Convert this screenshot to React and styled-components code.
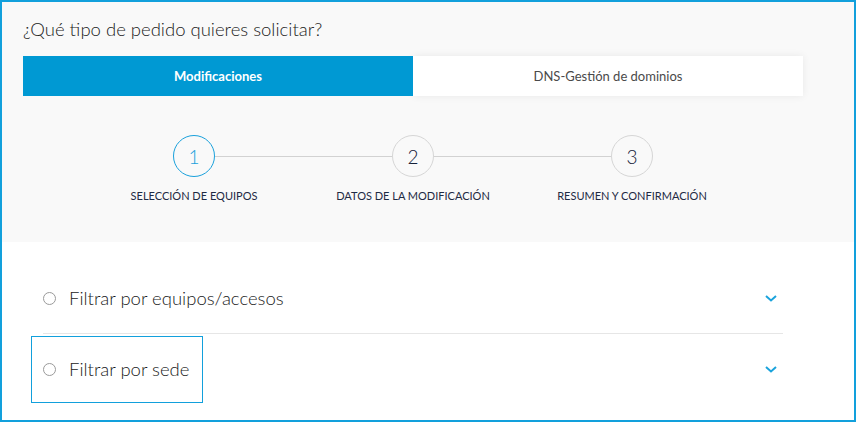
import React from "react";
import styled, { createGlobalStyle } from "styled-components";

const Global = createGlobalStyle`
  html, body { margin: 0; padding: 0; background: #fff; }
  body { font-family: Lato, "Open Sans", sans-serif; }
  * { box-sizing: border-box; }
`;

const Frame = styled.div`
  width: 856px;
  height: 422px;
  border: 2px solid #12a0dc;
  background: #fff;
  display: flex;
  flex-direction: column;
  overflow: hidden;
`;

const Header = styled.section`
  background: #f9f9f9;
  height: 240px;
  padding: 15px 51px 0 21px;
  display: flex;
  flex-direction: column;
`;

const Title = styled.h1`
  margin: 0;
  font-size: 18.5px;
  line-height: 24px;
  font-weight: 300;
  color: #222;
`;

const Tabs = styled.div`
  margin-top: 15px;
  display: flex;
  height: 40px;
  width: 780px;
`;

const Tab = styled.button`
  flex: 1;
  border: 0;
  margin: 0;
  font-family: inherit;
  font-size: 13px;
  font-weight: ${(p) => (p.$active ? 700 : 400)};
  color: ${(p) => (p.$active ? "#fff" : "#4a4a4a")};
  background: ${(p) => (p.$active ? "#0099d3" : "#fff")};
  box-shadow: ${(p) => (p.$active ? "none" : "0 0 8px rgba(0,0,0,0.07)")};
  position: relative;
  z-index: ${(p) => (p.$active ? 1 : 0)};
  cursor: pointer;
`;

const Stepper = styled.div`
  margin-top: 39px;
  display: flex;
  flex-direction: column;
  align-items: center;
`;

const CircleRow = styled.div`
  display: flex;
  align-items: center;
`;

const Circle = styled.div`
  width: 42px;
  height: 42px;
  border-radius: 50%;
  border: 1px solid ${(p) => (p.$active ? "#1aa1dc" : "#d6d6d6")};
  color: ${(p) => (p.$active ? "#1aa1dc" : "#152038")};
  background: #f9f9f9;
  display: flex;
  align-items: center;
  justify-content: center;
  font-size: 19px;
  font-weight: 300;
`;

const Connector = styled.div`
  width: 177px;
  height: 1px;
  background: #d2d2d2;
`;

const LabelRow = styled.div`
  margin-top: 12px;
  display: grid;
  grid-template-columns: repeat(3, 219px);
`;

const StepLabel = styled.div`
  text-align: center;
  font-size: 11px;
  line-height: 14px;
  color: #1e2a44;
  text-transform: uppercase;
`;

const List = styled.section`
  padding: 21px 71px 0 41px;
  display: flex;
  flex-direction: column;
`;

const Row = styled.div`
  height: ${(p) => (p.$last ? 70 : 71)}px;
  display: flex;
  align-items: center;
  justify-content: space-between;
  padding-right: 6px;
  border-bottom: ${(p) => (p.$last ? "none" : "1px solid #e6e6e6")};
`;

const Option = styled.label`
  margin-left: -12px;
  height: 67px;
  width: 172px;
  padding-left: 11px;
  display: flex;
  align-items: center;
  border: 1px solid ${(p) => (p.$focused ? "#12a0dc" : "transparent")};
  white-space: nowrap;
  cursor: pointer;
`;

const Radio = styled.span`
  width: 13px;
  height: 13px;
  border-radius: 50%;
  border: 1px solid #9a9a9a;
  background: #fff;
  margin-right: 13px;
  flex: none;
`;

const OptionText = styled.span`
  font-size: 18.5px;
  font-weight: 300;
  color: #1a1a1a;
`;

const Chevron = () => (
  <svg width="12" height="7" viewBox="0 0 12 7" fill="none">
    <polyline points="1,1 6,5.5 11,1" stroke="#1aa3dc" strokeWidth="2" />
  </svg>
);

const steps = ["Selección de equipos", "Datos de la modificación", "Resumen y confirmación"];

export default function App() {
  return (
    <>
      <Global />
      <Frame>
        <Header>
          <Title>¿Qué tipo de pedido quieres solicitar?</Title>
          <Tabs>
            <Tab $active>Modificaciones</Tab>
            <Tab>DNS-Gestión de dominios</Tab>
          </Tabs>
          <Stepper>
            <CircleRow>
              <Circle $active>1</Circle>
              <Connector />
              <Circle>2</Circle>
              <Connector />
              <Circle>3</Circle>
            </CircleRow>
            <LabelRow>
              {steps.map((s) => (
                <StepLabel key={s}>{s}</StepLabel>
              ))}
            </LabelRow>
          </Stepper>
        </Header>
        <List>
          <Row>
            <Option>
              <Radio />
              <OptionText>Filtrar por equipos/accesos</OptionText>
            </Option>
            <Chevron />
          </Row>
          <Row $last>
            <Option $focused>
              <Radio />
              <OptionText>Filtrar por sede</OptionText>
            </Option>
            <Chevron />
          </Row>
        </List>
      </Frame>
    </>
  );
}
